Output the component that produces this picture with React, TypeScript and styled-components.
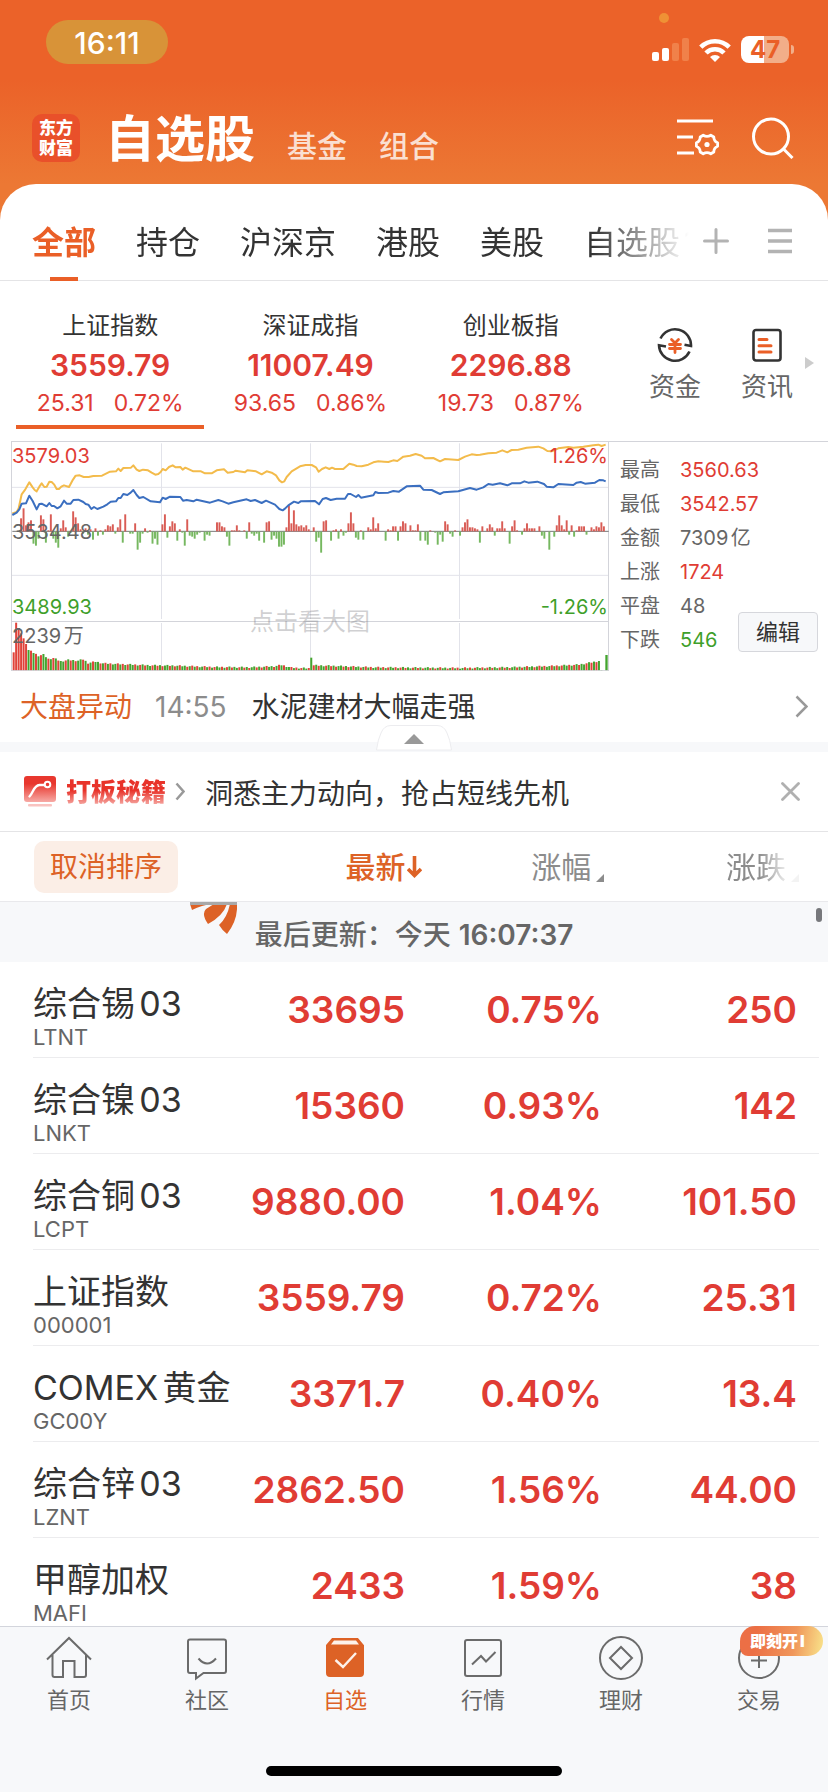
import React from "react";
import styled, { createGlobalStyle, css } from "styled-components";

const C = {
  brand: "#ea5f27",
  accent: "#dd6226",
  up: "#e03c34",
  down: "#3f9f2b",
  ink: "#333333",
  sub: "#666666",
  mute: "#8c8c8c",
  line: "#e4e4e6",
  panel: "#f7f8fa",
};

const Global = createGlobalStyle`
  * { box-sizing: border-box; }
  body {
    margin: 0;
    font-family: Inter, "Noto Sans CJK SC", sans-serif;
    color: ${C.ink};
    background: #fff;
    text-autospace: normal;
  }
  button {
    font: inherit;
    color: inherit;
    background: none;
    border: 0;
    padding: 0;
    cursor: pointer;
    white-space: nowrap;
  }
  a { color: inherit; text-decoration: none; }
  svg { display: block; flex: none; }
`;

const Screen = styled.div`
  display: flex;
  flex-direction: column;
  height: 100vh;
  background: linear-gradient(#eb6229 80px, #ec7834 184px, #ec7834 240px, #fff 240px);
`;

/* ---------- status bar ---------- */

const StatusBar = styled.div`
  display: flex;
  justify-content: space-between;
  align-items: flex-start;
  flex: none;
  height: 64px;
  padding: 0 34px 0 46px;
  color: #fff;
`;

const Clock = styled.time`
  width: 122px;
  height: 44px;
  margin-top: 20px;
  border-radius: 22px;
  background: #d89338;
  font-size: 30px;
  font-weight: 500;
  line-height: 46px;
  text-align: center;
`;

const StatusRight = styled.div`
  display: flex;
  flex-direction: column;
  gap: 13px;
  padding-top: 13px;
`;

const PrivacyDot = styled.i`
  width: 10px;
  height: 10px;
  margin-left: 7px;
  border-radius: 5px;
  background: #ef9135;
`;

const StatusIcons = styled.div`
  display: flex;
  align-items: center;
  gap: 10px;
`;

const Battery = styled.div`
  display: flex;
  align-items: center;
  gap: 2px;
`;

const BatteryBody = styled.span`
  width: 48px;
  height: 27px;
  border-radius: 8px;
  background: linear-gradient(90deg, #fff 48%, #f2ae89 48%);
  color: ${C.brand};
  font-size: 24px;
  font-weight: 700;
  line-height: 27px;
  text-align: center;
`;

const BatteryTip = styled.i`
  width: 3px;
  height: 9px;
  border-radius: 0 4px 4px 0;
  background: #f2ae89;
`;

/* ---------- title bar ---------- */

const TitleBar = styled.header`
  display: flex;
  align-items: center;
  flex: none;
  height: 120px;
  padding: 28px 34px 0 32px;
  color: #fff;
`;

const Logo = styled.a`
  width: 48px;
  height: 48px;
  padding-top: 3px;
  border-radius: 10px;
  background: #e9502a;
  font-family: "Noto Sans CJK SC", sans-serif;
  font-size: 17px;
  font-weight: 900;
  line-height: 20px;
  text-align: center;
`;

const TitleNav = styled.nav`
  display: flex;
  align-items: baseline;
  flex: 1;
  gap: 32px;
  margin-left: 25px;
  padding-top: 8px;
`;

const TitleLink = styled.button<{ $main?: boolean }>`
  font-size: ${(p) => (p.$main ? 50 : 30)}px;
  font-weight: ${(p) => (p.$main ? 700 : 500)};
  line-height: 60px;
  color: ${(p) => (p.$main ? "#fff" : "rgba(255,255,255,.78)")};
`;

const HeaderTools = styled.div`
  display: flex;
  align-items: center;
  gap: 32px;
`;

/* ---------- sheet & group tabs ---------- */

const Sheet = styled.main`
  display: flex;
  flex-direction: column;
  flex: 1;
  min-height: 0;
  border-radius: 36px 36px 0 0;
  background: #fff;
`;

const GroupBar = styled.div`
  display: flex;
  align-items: stretch;
  flex: none;
  height: 97px;
  padding-right: 36px;
  border-bottom: 1px solid ${C.line};
`;

const Groups = styled.nav`
  display: flex;
  flex: 1;
  min-width: 0;
  gap: 40px;
  margin-bottom: -1px;
  padding-left: 32px;
  overflow: hidden;
  mask-image: linear-gradient(90deg, #000 calc(100% - 96px), transparent);
`;

const Group = styled.button<{ $on?: boolean }>`
  position: relative;
  flex: none;
  padding-top: 14px;
  font-size: 32px;
  font-weight: ${(p) => (p.$on ? 700 : 400)};
  color: ${(p) => (p.$on ? C.brand : C.ink)};
  ${(p) =>
    p.$on &&
    css`
      &::after {
        content: "";
        position: absolute;
        left: 50%;
        bottom: 0;
        width: 28px;
        height: 4px;
        margin-left: -14px;
        background: ${C.brand};
      }
    `}
`;

const GroupTools = styled.div`
  display: flex;
  align-items: center;
  gap: 39px;
  padding: 17px 0 0 14px;
`;

/* ---------- index strip ---------- */

const IndexStrip = styled.section`
  display: flex;
  flex: none;
  height: 160px;
  padding: 0 14px 0 10px;
`;

const Indexes = styled.div`
  display: flex;
  flex: 1;
  margin-right: 28px;
`;

const IndexCard = styled.button<{ $on?: boolean }>`
  display: flex;
  flex-direction: column;
  align-items: center;
  flex: 1;
  margin: 0 6px 12px;
  padding-top: 31px;
  border-bottom: 4px solid ${(p) => (p.$on ? C.brand : "transparent")};
  color: ${C.up};
`;

const IndexName = styled.span`
  color: ${C.ink};
  font-size: 24px;
  line-height: 28px;
`;

const IndexValue = styled.strong`
  margin-top: 3px;
  font-size: 30px;
  font-weight: 600;
  line-height: 44px;
`;

const IndexDelta = styled.span`
  display: flex;
  gap: 20px;
  font-size: 23px;
  line-height: 32px;
`;

const Shortcuts = styled.div`
  display: flex;
  align-items: flex-start;
  gap: 20px;
`;

const Shortcut = styled.a`
  display: flex;
  flex-direction: column;
  align-items: center;
  gap: 8px;
  width: 72px;
  padding-top: 46px;
  color: ${C.sub};
  font-size: 26px;
  line-height: 32px;
`;

const StripArrow = styled.svg`
  margin: 76px 0 0 2px;
`;

/* ---------- chart ---------- */

const Quote = styled.section`
  display: flex;
  flex: none;
  height: 230px;
`;

const ChartBox = styled.div`
  position: relative;
  flex: 1;
  margin-left: 11px;
`;

const ChartSvg = styled.svg`
  width: 100%;
  height: 100%;
`;

const ChartLabel = styled.span<{ $top: number; $right?: boolean; $color: string }>`
  position: absolute;
  top: ${(p) => p.$top}px;
  ${(p) => (p.$right ? "right: 1px;" : "left: 1px;")}
  color: ${(p) => p.$color};
  font-size: 20px;
  line-height: 24px;
`;

const ChartHint = styled.span`
  position: absolute;
  top: 165px;
  left: 0;
  right: 0;
  color: rgba(120, 120, 125, 0.35);
  font-size: 24px;
  line-height: 32px;
  text-align: center;
`;

const Stats = styled.div`
  position: relative;
  width: 219px;
  padding: 11px 0 0 11px;
  border-top: 1px solid #d3d4da;
`;

const StatList = styled.dl`
  display: grid;
  grid-template-columns: 60px 1fr;
  margin: 0;
  color: ${C.sub};
  font-size: 20px;
  line-height: 34px;
`;

const StatValue = styled.dd<{ $color?: string }>`
  margin: 0;
  color: ${(p) => p.$color ?? C.sub};
`;

const EditButton = styled.button`
  position: absolute;
  right: 10px;
  bottom: 19px;
  width: 80px;
  height: 40px;
  border: 1px solid #d6d7dc;
  border-radius: 4px;
  background: ${C.panel};
  color: ${C.ink};
  font-size: 22px;
  line-height: 36px;
`;

/* ---------- news, promo ---------- */

const News = styled.a`
  display: flex;
  align-items: center;
  flex: none;
  height: 71px;
  padding: 0 20px;
  font-size: 28px;
  line-height: 40px;
`;

const NewsTag = styled.span`
  color: ${C.accent};
`;

const NewsTime = styled.time`
  margin: 0 25px 0 23px;
  color: ${C.mute};
`;

const NewsTitle = styled.span`
  flex: 1;
`;

const Band = styled.div`
  display: flex;
  justify-content: center;
  align-items: flex-end;
  flex: none;
  height: 10px;
  background: ${C.panel};
`;

const Fold = styled.button`
  height: 27px;
`;

const Promo = styled.section`
  display: flex;
  align-items: center;
  flex: none;
  height: 80px;
  padding: 0 28px 0 24px;
  border-bottom: 1px solid ${C.line};
  font-size: 28px;
`;

const PromoBrand = styled.span`
  margin: 0 9px;
  background: linear-gradient(#e8332a 45%, #f49a94 85%);
  background-clip: text;
  color: transparent;
  font-size: 25px;
  font-weight: 900;
  line-height: 32px;
`;

const PromoText = styled.a`
  flex: 1;
  margin-left: 20px;
`;

/* ---------- stock table ---------- */

const Board = styled.table`
  display: flex;
  flex-direction: column;
  flex: 1;
  min-height: 0;
  overflow: hidden;
  font-size: 37px;
`;

const Head = styled.thead`
  display: block;
  flex: none;
`;

const Body = styled.tbody`
  display: block;
`;

const columns = css`
  display: grid;
  grid-template-columns: minmax(0, 190fr) minmax(0, 182fr) minmax(0, 197fr) minmax(0, 195fr);
`;

const HeadRow = styled.tr`
  ${columns}
  align-items: center;
  height: 70px;
  padding: 0 31px 0 34px;
  border-bottom: 1px solid #e9e9ec;
`;

const HeadCell = styled.th<{ $left?: boolean }>`
  display: flex;
  justify-content: ${(p) => (p.$left ? "flex-start" : "flex-end")};
  padding: 0;
  font-size: 30px;
  font-weight: 400;
`;

const ResetSort = styled.button`
  width: 144px;
  height: 52px;
  border-radius: 10px;
  background: #fbeee6;
  color: ${C.accent};
  font-size: 28px;
  line-height: 50px;
`;

const SortButton = styled.button<{ $on?: boolean; $fade?: boolean }>`
  display: flex;
  align-items: center;
  gap: ${(p) => (p.$on ? 1 : 5)}px;
  margin-right: ${(p) => (p.$on ? -16 : -2)}px;
  color: ${(p) => (p.$on ? C.accent : C.mute)};
  font-weight: ${(p) => (p.$on ? 500 : 400)};
  line-height: 40px;
  ${(p) => p.$fade && "mask-image: linear-gradient(90deg, #000 45%, rgba(0,0,0,.1) 85%);"}
`;

const SortMark = styled.svg`
  margin-top: 22px;
`;

const UpdateRow = styled.tr`
  display: block;
  background: ${C.panel};
`;

const UpdateCell = styled.td`
  display: flex;
  justify-content: center;
  gap: 8px;
  position: relative;
  height: 60px;
  padding: 0;
  color: ${C.sub};
  font-size: 28px;
  font-weight: 500;
  line-height: 66px;
`;

const UpdateTime = styled.time`
  font-weight: 600;
`;

const Petals = styled.svg`
  position: absolute;
  top: 0;
  left: 190px;
`;

const ScrollThumb = styled.i`
  position: absolute;
  top: 6px;
  right: 6px;
  width: 6px;
  height: 14px;
  border-radius: 3px;
  background: #77787c;
`;

const Row = styled.tr`
  ${columns}
  height: 96px;
  margin: 0 9px 0 33px;
  padding-right: 22px;
  border-bottom: 1px solid #ececee;
`;

const NameCell = styled.td`
  padding: 21px 0 0;
  white-space: nowrap;
`;

const StockName = styled.div`
  font-size: 34px;
  line-height: 42px;
`;

const StockCode = styled.div`
  color: ${C.sub};
  font-size: 22px;
  line-height: 24px;
`;

const Num = styled.td`
  padding: 0;
  color: ${C.up};
  font-weight: 600;
  line-height: 96px;
  text-align: right;
`;

/* ---------- bottom navigation ---------- */

const Dock = styled.footer`
  display: flex;
  flex-direction: column;
  align-items: center;
  justify-content: space-between;
  flex: none;
  height: 166px;
  padding-bottom: 16px;
  border-top: 1px solid #d3d5dc;
  background: ${C.panel};
`;

const DockNav = styled.nav`
  display: flex;
  width: 100%;
`;

const DockItem = styled.a<{ $on?: boolean }>`
  display: flex;
  flex-direction: column;
  align-items: center;
  position: relative;
  flex: 1;
  gap: 3px;
  padding-top: 8px;
  color: ${(p) => (p.$on ? C.accent : C.sub)};
  font-size: 22px;
  line-height: 32px;
`;

const DockBadge = styled.span`
  position: absolute;
  top: -1px;
  right: 5px;
  width: 83px;
  height: 30px;
  padding-left: 10px;
  border-radius: 15px 15px 15px 8px;
  background: linear-gradient(100deg, #ec6f45 20%, #f0965a 65%, #f8dc86 96%);
  color: #fff;
  font-size: 16px;
  font-weight: 900;
  line-height: 30px;
`;

const HomeIndicator = styled.i`
  width: 296px;
  height: 10px;
  border-radius: 5px;
  background: #000;
`;

/* ---------- data ---------- */

const indexes = [
  { name: "上证指数", value: "3559.79", diff: "25.31", pct: "0.72%" },
  { name: "深证成指", value: "11007.49", diff: "93.65", pct: "0.86%" },
  { name: "创业板指", value: "2296.88", diff: "19.73", pct: "0.87%" },
];

const stats: [string, string, string?][] = [
  ["最高", "3560.63", C.up],
  ["最低", "3542.57", C.up],
  ["金额", "7309亿"],
  ["上涨", "1724", C.up],
  ["平盘", "48"],
  ["下跌", "546", C.down],
];

const stocks = [
  ["综合锡03", "LTNT", "33695", "0.75%", "250"],
  ["综合镍03", "LNKT", "15360", "0.93%", "142"],
  ["综合铜03", "LCPT", "9880.00", "1.04%", "101.50"],
  ["上证指数", "000001", "3559.79", "0.72%", "25.31"],
  ["COMEX黄金", "GC00Y", "3371.7", "0.40%", "13.4"],
  ["综合锌03", "LZNT", "2862.50", "1.56%", "44.00"],
  ["甲醇加权", "MAFI", "2433", "1.59%", "38"],
];

const leadLine =
  "37,250 50,246 56,235 65,193 76,178 88,157 98,172 104,180 110,184 118,170 125,160 133,171 140,170 148,155 155,156 162,163 170,177 177,177 184,170 192,166 207,171 217,152 227,137 239,136 251,141 266,141 280,138 306,137 318,131 330,125 348,124 355,116 362,123 370,114 393,113 400,106 410,119 418,123 429,119 444,121 455,128 466,134 475,132 482,126 488,117 497,121 507,111 518,106 527,112 541,111 548,119 556,113 580,124 603,124 615,130 635,130 650,121 672,118 683,128 700,126 707,122 735,127 742,121 768,124 785,133 800,124 815,128 828,136 838,151 846,157 853,154 860,141 875,124 900,109 917,105 935,105 948,112 956,125 966,117 977,112 988,117 996,113 1005,117 1030,117 1048,101 1060,104 1070,108 1085,109 1105,104 1120,97 1135,94 1152,95 1165,96 1180,91 1192,93 1210,80 1230,77 1247,72 1265,77 1275,85 1300,84 1320,94 1335,87 1375,90 1395,80 1415,73 1430,75 1440,74 1465,70 1490,68 1507,61 1522,67 1535,60 1555,59 1580,53 1615,50 1630,55 1642,63 1655,64 1675,55 1705,51 1720,53 1750,50 1780,46 1795,44 1805,48 1817,44";

const priceLine =
  "37,255 50,248 58,238 65,221 78,220 88,197 98,213 110,238 118,222 125,221 140,229 148,219 155,228 162,228 172,235 182,229 192,212 200,221 212,221 220,210 235,209 250,216 257,222 265,224 274,237 282,231 292,237 310,230 322,223 332,215 348,214 355,204 362,204 370,192 382,195 392,188 400,180 410,195 418,204 430,201 452,214 480,217 488,203 497,207 510,200 541,201 549,212 560,210 580,214 590,209 630,218 655,210 668,214 685,221 700,217 740,208 752,213 765,210 785,219 798,212 825,224 838,237 848,241 855,236 865,226 882,215 895,219 902,214 945,213 957,223 968,207 978,204 992,210 1010,206 1035,206 1044,192 1052,192 1068,201 1075,195 1083,203 1120,196 1126,186 1135,189 1165,188 1180,183 1197,185 1220,169 1260,167 1270,179 1295,180 1320,192 1330,187 1375,184 1410,174 1430,179 1450,172 1465,162 1478,164 1500,160 1522,166 1535,160 1560,160 1573,154 1585,158 1612,155 1632,162 1640,170 1660,172 1675,162 1720,165 1730,158 1742,156 1755,161 1785,158 1798,150 1810,151 1817,154";

/* net buying per minute; positive bars rise above the previous close */
const netFlow = [
  0, 0, 0, 13, 23, 6, 9, 11, -12, -14, -7, 16, 12, -11, 1, 17, -7, -11, -16, 3, 11, 4, -5, -1, 20, 14, 8, 2, -2, 3, -3, 2, -8, 3,
  -4, 1, -3, 2, 6, 5, 7, -2, 4, 12, -11, 17, 0, -2, -2, 8, -18, -11, -2, 3, -1, 1, -12, -7, -13, 0, 7, 17, -6, 5, 10, 8, -9, 2, -1,
  -14, 12, -4, -5, -7, -3, -1, 0, -9, -3, -4, 0, 0, 9, 9, 5, 4, -5, -14, 1, 1, 6, 1, 0, 1, -7, 9, -2, -4, -2, -9, 0, -11, 9, 10,
  -8, -4, -7, -15, -15, -13, 4, 26, 8, 21, 7, 5, 6, 4, 6, 2, 0, 4, -10, -6, -21, 10, 11, 0, -9, 1, 2, -7, 2, -4, -1, 8, 19, 8, -6,
  -8, 1, -8, 0, 4, 2, 14, 3, 8, 0, 0, -9, 2, 1, 5, 5, -9, 5, 10, 8, 0, 6, 1, 1, 7, -9, 0, -9, -13, 1, 0, -1, -13, -3, -10, 10, 7,
  -2, -5, 1, 0, -4, 4, 9, 12, 4, 4, 3, 2, -11, 5, 0, 3, 7, 4, -4, 3, 3, 10, 3, 0, -12, 5, 11, 1, 0, -3, 3, 8, 3, 3, 3, 0, 5, -4,
  -7, 0, -18, 0, -5, 6, 16, 6, 2, 11, -3, 6, -5, 1, 5, 5, 5, -3, 0, 4, 2, 5, 4, 9, 5,
];

const volumeKeys = [
  [0, 55], [1, 144], [2, 128], [3, 112], [4, 97], [5, 80], [6, 62], [8, 54], [10, 45], [12, 48], [14, 35], [16, 38], [19, 28],
  [22, 32], [26, 30], [28, 34], [30, 23], [33, 27], [36, 22], [45, 19], [55, 16], [65, 15], [80, 11], [95, 10], [105, 13],
  [108, 17], [112, 9], [119, 7], [120, 41], [121, 16], [130, 14], [145, 10], [160, 9], [180, 8], [200, 10], [217, 14], [228, 18],
  [236, 29], [237, 2], [238, 0],
];

const volumeAt = (i: number) => {
  const k = volumeKeys.findIndex(([at]) => at >= i);
  if (k <= 0) return k === 0 ? volumeKeys[0][1] : 0;
  const [x0, y0] = volumeKeys[k - 1];
  const [x1, y1] = volumeKeys[k];
  const base = y0 + ((y1 - y0) * (i - x0)) / (x1 - x0);
  return base > 3 && i > 5 ? base + ((i * 7) % 5) - 2 : base;
};

const STEP = 7.44;

function Chart() {
  return (
    <ChartSvg viewBox="33 33 1794 690" preserveAspectRatio="none" role="img" aria-label="上证指数分时图">
      <g stroke="#e2e3ea" strokeWidth="3">
        <path d="M33 172H1825M33 436H1825M484.500 40V567M484.500 579V722M931.500 40V567M931.500 579V722M1378.500 40V567M1378.500 579V722" />
      </g>
      <path d="M33 34.500H1827M33 574.500H1825M34.500 33V723M1825.500 33V723" stroke="#d3d4da" strokeWidth="3" fill="none" />
      <path d="M37 304H1826" stroke="#5c5c5c" strokeWidth="2.500" />
      {netFlow.map((v, i) =>
        v ? (
          <rect
            key={i}
            x={38 + i * STEP}
            y={v > 0 ? 304 - v * 3 : 305}
            width="5.800"
            height={Math.abs(v) * 3}
            fill={v > 0 ? "#d95c55" : "#76b860"}
          />
        ) : null
      )}
      {Array.from({ length: 239 }, (_, i) => {
        const h = volumeAt(i);
        return h > 0 ? (
          <rect
            key={i}
            x={38 + i * STEP}
            y={722 - h}
            width="6"
            height={h}
            fill={i > 5 && (i === 120 || (i * i + 3 * i) % 7 > 3) ? "#44a42f" : "#e0433a"}
          />
        ) : null;
      })}
      <rect x="1816" y="675" width="7" height="47" fill="#44a42f" />
      <path d="M33 722H1827" stroke="#d3d4da" strokeWidth="3" />
      <polyline points={leadLine} fill="none" stroke="#f3bb4b" strokeWidth="6" strokeLinejoin="round" />
      <polyline points={priceLine} fill="none" stroke="#3b6fc0" strokeWidth="6" strokeLinejoin="round" />
    </ChartSvg>
  );
}

/* ---------- icons ---------- */

const Signal = () => (
  <svg width="37" height="23" fill="#fff">
    <rect y="14" width="7" height="9" rx="2" />
    <rect x="10" y="10" width="7" height="13" rx="2" />
    <g fill="#f0814a">
      <rect x="20" y="5" width="7" height="18" rx="2" />
      <rect x="30" width="7" height="23" rx="2" />
    </g>
  </svg>
);

const Wifi = () => (
  <svg width="32" height="24" viewBox="0 0 32 24" fill="none" stroke="#fff" strokeWidth="4.600">
    <path d="M1.800 9.200a20 20 0 0 1 28.400 0" />
    <path d="M7 15a12.600 12.600 0 0 1 18 0" />
    <path d="M16 24l-5-5a7 7 0 0 1 10 0z" fill="#fff" stroke="none" />
  </svg>
);

const ListGear = () => (
  <svg width="43" height="40" viewBox="0 0 43 40" fill="none" stroke="#fff" strokeWidth="2.800">
    <path d="M0 3h36M0 19h16M0 35h17" />
    <path
      d="M26.200 17.200q3.800 2.400 7.600 0l3 1.800q0 4.200 3.800 5.800v3.400q-3.800 1.600-3.800 5.800l-3 1.800q-3.800-2.400-7.600 0l-3-1.800q0-4.200-3.800-5.800v-3.400q3.800-1.600 3.800-5.800z"
      strokeLinejoin="round"
    />
    <circle cx="30" cy="26.500" r="2.600" fill="#fff" stroke="none" />
  </svg>
);

const Search = () => (
  <svg width="42" height="42" viewBox="0 0 42 42" fill="none" stroke="#fff" strokeWidth="3">
    <circle cx="19" cy="19.500" r="17.500" />
    <path d="M31.500 32l9 9" />
  </svg>
);

const Plus = () => (
  <svg width="26" height="26" stroke="#b3b3b3" strokeWidth="3" strokeLinecap="round">
    <path d="M13 1.500v23M1.500 13h23" />
  </svg>
);

const Menu = () => (
  <svg width="24" height="26" stroke="#b3b3b3" strokeWidth="3.500">
    <path d="M0 2.500h24M0 13h24M0 23.500h24" />
  </svg>
);

const Funds = () => (
  <svg width="36" height="36" viewBox="0 0 36 36" fill="none" stroke="#333" strokeWidth="2.600">
    <path d="M3.500 11.500A16 16 0 0 1 34 19l-6.500-1.200" />
    <path d="M32.500 24.500A16 16 0 0 1 2 18.200l7 1.300" />
    <path d="M14.500 12.500l3.500 3.500 3.500-3.500M12.500 17.500h11M12.500 21.500h11M18 17v8.500" stroke={C.brand} strokeWidth="2.800" strokeLinecap="round" />
  </svg>
);

const Articles = () => (
  <svg width="30" height="36" viewBox="0 0 30 36" fill="none" stroke="#333" strokeWidth="2.600">
    <rect x="1.500" y="3" width="27" height="30.500" rx="2.500" />
    <path d="M7 12.500h8M7 18.800h12M7 25h12" stroke={C.brand} strokeWidth="3" strokeLinecap="round" />
  </svg>
);

const ChevronRight = ({ w, h }: { w: number; h: number }) => (
  <svg width={w} height={h} viewBox={`0 0 ${w} ${h}`} fill="none" stroke="#999" strokeWidth="2.500">
    <path d={`M1.500 1.500L${w - 1.5} ${h / 2}L1.500 ${h - 1.5}`} />
  </svg>
);

const FoldShape = () => (
  <svg width="76" height="27" viewBox="0 0 76 27">
    <path d="M.5 25Q2 14 5 8q3-7.500 10-7.500h46q7 0 10 7.500 3 6 4.500 17z" fill="#fff" stroke="#ececef" />
    <path d="M28 19l10-10 10 10z" fill="#999" />
  </svg>
);

const PromoIcon = () => (
  <svg width="33" height="31" viewBox="0 0 33 31" fill="none">
    <defs>
      <linearGradient id="promo" x1="0" y1="0" x2="0" y2="1">
        <stop offset=".3" stopColor="#e8372e" />
        <stop offset="1" stopColor="#f7aaa5" />
      </linearGradient>
    </defs>
    <rect width="32" height="26" rx="3" fill="url(#promo)" />
    <rect x="4" y="28" width="24" height="2.500" rx="1" fill="#f9c3c0" />
    <path d="M5.500 20.500c4-4 4-11 10-11.500h5" stroke="#fff" strokeWidth="2.400" strokeLinecap="round" />
    <circle cx="23.500" cy="8.500" r="2.800" stroke="#fff" strokeWidth="2" />
  </svg>
);

const Close = () => (
  <svg width="19" height="19" stroke="#b0b0b0" strokeWidth="2.800" strokeLinecap="round">
    <path d="M1.500 1.500l16 16M17.500 1.500l-16 16" />
  </svg>
);

const SortDown = () => (
  <svg width="15" height="22" viewBox="0 0 15 22" fill="none" stroke={C.accent} strokeWidth="3.600">
    <path d="M7.500 0v19M1 13l6.500 6.500L14 13" />
  </svg>
);

const Corner = () => (
  <SortMark width="8" height="8" fill={C.mute}>
    <path d="M8 0v8H0z" />
  </SortMark>
);

const dockIcon = { width: 46, height: 46, viewBox: "0 0 46 46", fill: "none", stroke: "#6b6b6b", strokeWidth: 2 };

const HomeIcon = () => (
  <svg {...dockIcon}>
    <path d="M1 24.500L23 3l22 21.500M6.500 20v20q0 2 2 2H17V26h11.500v16H38q2 0 2-2V20" />
  </svg>
);
const ChatIcon = () => (
  <svg {...dockIcon}>
    <path d="M6 4.500h34q2 0 2 2v29.500q0 2-2 2H19.500L12 43.500V38H6q-2 0-2-2V6.500q0-2 2-2zM14.500 23.500q8.500 10 17.500 0" />
  </svg>
);
const PickIcon = () => (
  <svg {...dockIcon} stroke={C.accent}>
    <path d="M5 10.500L10.500 4h25L41 10.500V38q0 3-3 3H8q-3 0-3-3z" fill={C.accent} />
    <path d="M9 9.500L12 5.500h22l3 4z" fill="#fdf1ea" stroke="none" />
    <path d="M13.500 25l7.500 7 13-14" stroke="#fdf1ea" strokeWidth="2.400" />
  </svg>
);
const MarketIcon = () => (
  <svg {...dockIcon}>
    <rect x="5" y="5" width="36" height="36" rx="2" />
    <path d="M12 29.500l9-8.500 5 5.500 9.500-9.500" />
  </svg>
);
const WealthIcon = () => (
  <svg {...dockIcon}>
    <circle cx="23" cy="23" r="21" />
    <path d="M23 12l11 11-11 11-11-11z" />
  </svg>
);
const TradeIcon = () => (
  <svg {...dockIcon}>
    <circle cx="23" cy="23" r="20" />
    <path d="M23 17v16M15 25.500h16" />
  </svg>
);

const dock = [
  { label: "首页", icon: <HomeIcon /> },
  { label: "社区", icon: <ChatIcon /> },
  { label: "自选", icon: <PickIcon />, on: true },
  { label: "行情", icon: <MarketIcon /> },
  { label: "理财", icon: <WealthIcon /> },
  { label: "交易", icon: <TradeIcon />, badge: "即刻开I" },
];

export default function App() {
  return (
    <Screen>
      <Global />
      <StatusBar>
        <Clock>16:11</Clock>
        <StatusRight>
          <PrivacyDot />
          <StatusIcons>
            <Signal />
            <Wifi />
            <Battery>
              <BatteryBody>47</BatteryBody>
              <BatteryTip />
            </Battery>
          </StatusIcons>
        </StatusRight>
      </StatusBar>

      <TitleBar>
        <Logo href="#home">
          东方
          <br />
          财富
        </Logo>
        <TitleNav>
          <TitleLink $main>自选股</TitleLink>
          <TitleLink>基金</TitleLink>
          <TitleLink>组合</TitleLink>
        </TitleNav>
        <HeaderTools>
          <button aria-label="管理">
            <ListGear />
          </button>
          <button aria-label="搜索">
            <Search />
          </button>
        </HeaderTools>
      </TitleBar>

      <Sheet>
        <GroupBar>
          <Groups>
            <Group $on>全部</Group>
            <Group>持仓</Group>
            <Group>沪深京</Group>
            <Group>港股</Group>
            <Group>美股</Group>
            <Group>自选股1</Group>
          </Groups>
          <GroupTools>
            <button aria-label="添加分组">
              <Plus />
            </button>
            <button aria-label="分组列表">
              <Menu />
            </button>
          </GroupTools>
        </GroupBar>

        <IndexStrip>
          <Indexes>
            {indexes.map((x, i) => (
              <IndexCard key={x.name} $on={i === 0}>
                <IndexName>{x.name}</IndexName>
                <IndexValue>{x.value}</IndexValue>
                <IndexDelta>
                  <span>{x.diff}</span>
                  <span>{x.pct}</span>
                </IndexDelta>
              </IndexCard>
            ))}
          </Indexes>
          <Shortcuts>
            <Shortcut href="#funds">
              <Funds />
              资金
            </Shortcut>
            <Shortcut href="#articles">
              <Articles />
              资讯
            </Shortcut>
          </Shortcuts>
          <StripArrow width="9" height="12" fill="#ccc">
            <path d="M0 0l9 6-9 6z" />
          </StripArrow>
        </IndexStrip>

        <Quote>
          <ChartBox>
            <Chart />
            <ChartLabel $top={3} $color={C.up}>3579.03</ChartLabel>
            <ChartLabel $top={3} $color={C.up} $right>1.26%</ChartLabel>
            <ChartLabel $top={79} $color={C.sub}>3534.48</ChartLabel>
            <ChartLabel $top={154} $color={C.down}>3489.93</ChartLabel>
            <ChartLabel $top={154} $color={C.down} $right>-1.26%</ChartLabel>
            <ChartLabel $top={183} $color={C.sub}>2239万</ChartLabel>
            <ChartHint>点击看大图</ChartHint>
          </ChartBox>
          <Stats>
            <StatList>
              {stats.map(([k, v, color]) => (
                <React.Fragment key={k}>
                  <dt>{k}</dt>
                  <StatValue $color={color}>{v}</StatValue>
                </React.Fragment>
              ))}
            </StatList>
            <EditButton>编辑</EditButton>
          </Stats>
        </Quote>

        <News href="#news">
          <NewsTag>大盘异动</NewsTag>
          <NewsTime>14:55</NewsTime>
          <NewsTitle>水泥建材大幅走强</NewsTitle>
          <ChevronRight w={13} h={23} />
        </News>

        <Band>
          <Fold aria-label="收起">
            <FoldShape />
          </Fold>
        </Band>

        <Promo>
          <PromoIcon />
          <PromoBrand>打板秘籍</PromoBrand>
          <ChevronRight w={10} h={19} />
          <PromoText href="#promo">洞悉主力动向，抢占短线先机</PromoText>
          <button aria-label="关闭">
            <Close />
          </button>
        </Promo>

        <Board>
          <Head>
            <HeadRow>
              <HeadCell $left>
                <ResetSort>取消排序</ResetSort>
              </HeadCell>
              <HeadCell>
                <SortButton $on>
                  最新
                  <SortDown />
                </SortButton>
              </HeadCell>
              <HeadCell>
                <SortButton>
                  涨幅
                  <Corner />
                </SortButton>
              </HeadCell>
              <HeadCell>
                <SortButton $fade>
                  涨跌
                  <Corner />
                </SortButton>
              </HeadCell>
            </HeadRow>
          </Head>
          <Body>
            <UpdateRow>
              <UpdateCell colSpan={4}>
                <Petals width="47" height="32" fill={C.accent}>
                  <path d="M0 2h22Q12 3 2 8zM24 2h13Q33 14 18 22 11 12 16 7zM40 2h7q1 16-10 30-5-4-8-9Q37 16 40 2z" />
                  <rect width="47" height="3" fill="#a9a9a9" />
                </Petals>
                <span>最后更新：今天</span>
                <UpdateTime>16:07:37</UpdateTime>
                <ScrollThumb />
              </UpdateCell>
            </UpdateRow>
            {stocks.map(([name, code, price, pct, diff]) => (
              <Row key={code}>
                <NameCell>
                  <StockName>{name}</StockName>
                  <StockCode>{code}</StockCode>
                </NameCell>
                <Num>{price}</Num>
                <Num>{pct}</Num>
                <Num>{diff}</Num>
              </Row>
            ))}
          </Body>
        </Board>
      </Sheet>

      <Dock>
        <DockNav>
          {dock.map((d) => (
            <DockItem key={d.label} href={`#${d.label}`} $on={d.on}>
              {d.icon}
              {d.label}
              {d.badge && <DockBadge>{d.badge}</DockBadge>}
            </DockItem>
          ))}
        </DockNav>
        <HomeIndicator />
      </Dock>
    </Screen>
  );
}
